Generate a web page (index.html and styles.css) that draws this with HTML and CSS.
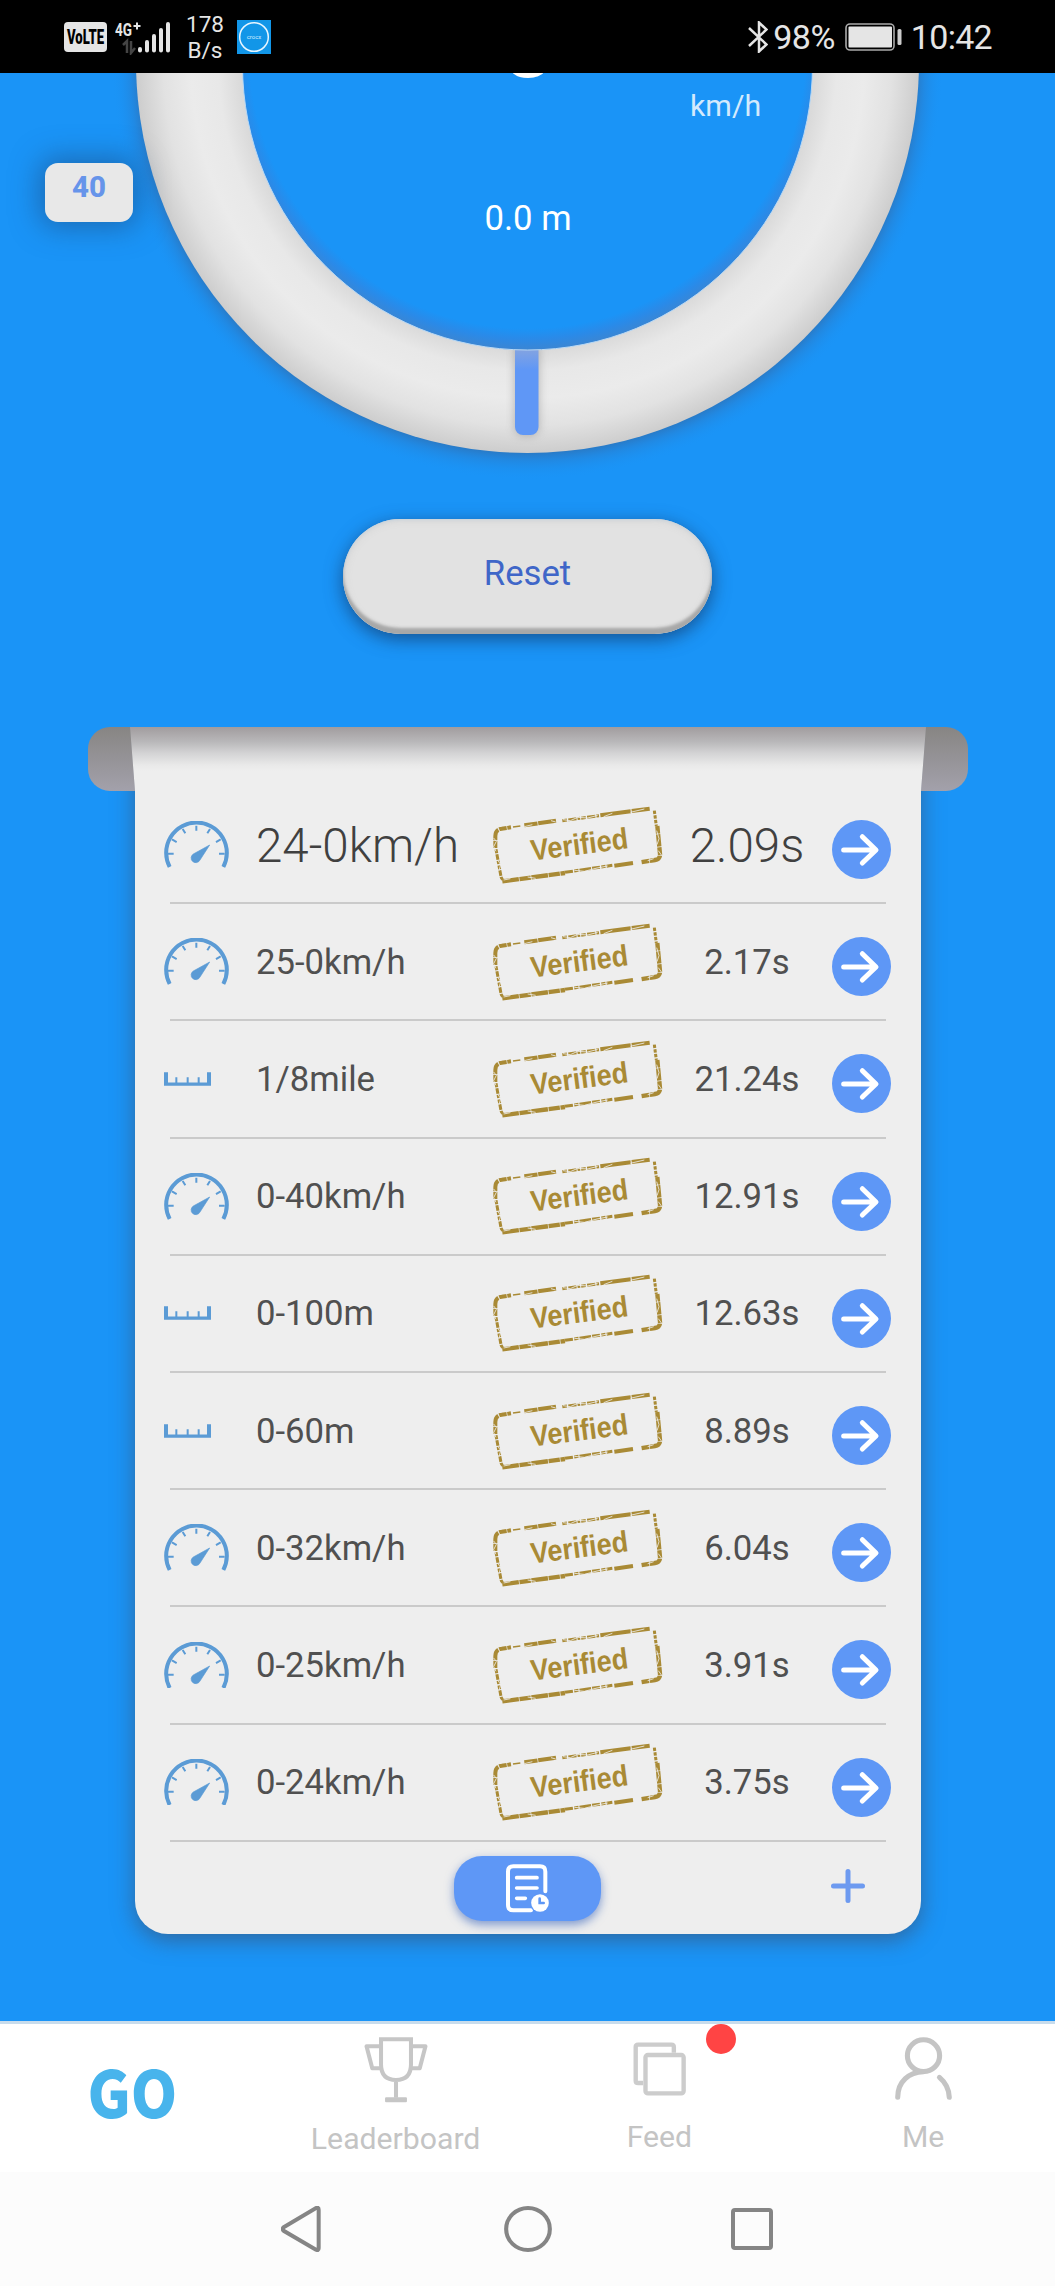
FILE: index.html
```html
<!DOCTYPE html>
<html lang="en">
<head>
<meta charset="utf-8">
<title>Speed results</title>
<link rel="stylesheet" href="styles.css">
</head>
<body>
<svg class="defs" width="0" height="0" aria-hidden="true">
  <symbol id="gauge" viewBox="282 362 195 140">
    <path d="M299 500A91 91 0 1 1 460 500" fill="none" stroke="#5b9bd5" stroke-width="12"/>
    <path d="M379 376V391M338 386L346 399M420 386L412 399M306 417L320 425M452 417L438 425M294 460H311M464 460H447" stroke="#5b9bd5" stroke-width="6"/>
    <path d="M419 434L390 479A14 14 0 1 1 370 461Z" fill="#5b9bd5" stroke="#5b9bd5" stroke-width="2"/>
  </symbol>
  <symbol id="ruler" viewBox="72 155 141 41">
    <path d="M72 155H84V186H106V170H112V186H140V170H146V186H173V170H179V186H201V155H213V196H72Z" fill="#5b9bd5"/>
  </symbol>
  <symbol id="arrow" viewBox="0 0 177 177">
    <circle cx="88.500" cy="88.500" r="88.500" fill="#5e97f6"/>
    <path d="M35 90H130M91 50L132 90L91 129" fill="none" stroke="#fff" stroke-width="15" stroke-linecap="round" stroke-linejoin="round"/>
  </symbol>
  <symbol id="stamp" viewBox="66 314 510 234">
    <g fill="none" stroke="#a98a35" stroke-width="12">
      <path d="M73 440V404Q73 384 92 382L120 378" stroke-dasharray="22 2 34 3"/>
      <path d="M75 444L90 526Q92 536 104 538" stroke-width="9" stroke-dasharray="12 3 17 3 10 4"/>
      <path d="M126 377L148 374" stroke-width="5"/>
      <path d="M160 372L256 358" stroke-dasharray="40 2 54"/>
      <path d="M274 358L386 343" stroke-width="9" stroke-dasharray="14 4 25 3 8 3"/>
      <path d="M388 342L536 322" stroke-dasharray="92 3 60"/>
      <path d="M550 328L556 374" stroke-width="9" stroke-dasharray="10 4"/>
      <path d="M559 374L567 458Q568 474 552 476L510 483" stroke-width="13" stroke-dasharray="23 2 37 2"/>
      <path d="M94 540L282 515" stroke-width="13" stroke-dasharray="50 2 34 2"/>
      <path d="M282 513L424 492" stroke-width="9" stroke-dasharray="24 4 13 3 35 3"/>
      <path d="M430 493L486 485"/>
    </g>
    <g fill="none" stroke="#eee" stroke-width="2.500">
      <path d="M68 410L76 420L68 436L75 450M80 476L89 490L84 508M98 536L118 532M160 376L184 370M240 358L254 362M276 355L298 358L320 348L350 350L380 342M398 346L424 336M478 333L520 323M557 388L564 412L558 430M562 448L572 462M530 478L548 472M170 527L194 531M310 507L340 510L378 500L410 494"/>
    </g>
    <text transform="translate(183 478) rotate(-7.300)" textLength="294" lengthAdjust="spacingAndGlyphs" class="stamp-text">Verified</text>
  </symbol>
</svg>

<header class="status">
  <div class="status-left">
    <svg class="volte" width="43" height="30" viewBox="0 0 43 30"><rect width="43" height="30" rx="4" fill="#e5e5e5"/><text x="3" y="21.500" textLength="37" lengthAdjust="spacingAndGlyphs" class="volte-text">VoLTE</text></svg>
    <svg class="signal" width="56" height="36" viewBox="0 0 56 36">
      <text x="0" y="17" textLength="17" lengthAdjust="spacingAndGlyphs" class="signal-text">4G</text>
      <path d="M18.500 7H25.500M22 3.500V10.500" stroke="#e5e5e5" stroke-width="2"/>
      <path d="M8 26L12 22V34M16 22V34L20 29" fill="none" stroke="#444" stroke-width="2.500"/>
      <path d="M25 30V31.500M32 23V31.500M39 17V31.500M46 11V31.500M53 5V31.500" stroke="#e5e5e5" stroke-width="4" stroke-linecap="round"/>
    </svg>
    <div class="rate"><span>178</span><span>B/s</span></div>
    <svg class="app" width="34" height="34" viewBox="0 0 34 34"><rect width="34" height="34" fill="#1296e8"/><circle cx="17" cy="17" r="14.300" fill="none" stroke="#e8f6ff" stroke-width="1.500"/><text x="17" y="19" text-anchor="middle" class="app-text">crocx</text></svg>
  </div>
  <div class="status-right">
    <svg class="bt" width="20" height="32" viewBox="0 0 20 32"><path d="M1 7L18.500 23.500L11 30.500V1.500L18.500 8.500L1 25" fill="none" stroke="#e5e5e5" stroke-width="2.500"/></svg>
    <span class="pct">98%</span>
    <svg class="battery" width="57" height="28" viewBox="0 0 57 28"><rect x="1" y="1" width="48" height="26" rx="4" fill="none" stroke="#aaa" stroke-width="1.600"/><rect x="3.500" y="3.500" width="43.500" height="21" rx="1" fill="#e5e5e5"/><rect x="52.500" y="6" width="4" height="16" rx="1.500" fill="#ccc"/></svg>
    <span class="clock">10:42</span>
  </div>
</header>

<main class="screen">
  <section class="dial">
    <svg width="1055" height="446" viewBox="0 73 1055 446">
      <defs>
        <radialGradient id="halo" gradientUnits="userSpaceOnUse" cx="527.500" cy="64" r="416"><stop offset=".93" stop-color="#35649d" stop-opacity=".62"/><stop offset=".955" stop-color="#3070b5" stop-opacity=".3"/><stop offset="1" stop-color="#1a94f7" stop-opacity="0"/></radialGradient>
        <radialGradient id="band" gradientUnits="userSpaceOnUse" cx="527.500" cy="61.500" r="391.500"><stop offset=".735" stop-color="#dadada"/><stop offset=".79" stop-color="#e8e8e8"/><stop offset=".86" stop-color="#ebebeb"/><stop offset=".93" stop-color="#e2e2e2"/><stop offset="1" stop-color="#cdcdcd"/></radialGradient>
        <radialGradient id="well" gradientUnits="userSpaceOnUse" cx="527.500" cy="50" r="301"><stop offset=".925" stop-color="#1a94f7"/><stop offset=".96" stop-color="#2a8ae8"/><stop offset="1" stop-color="#3d85d0"/></radialGradient>
        <linearGradient id="needle" x2="0" y2="1"><stop offset=".05" stop-color="#88a5de"/><stop offset=".3" stop-color="#5f97f6"/></linearGradient>
        <filter id="soft" x="-1" y="-1" width="3" height="3"><feGaussianBlur stdDeviation="5"/></filter>
      </defs>
      <circle cx="527.500" cy="64" r="416" fill="url(#halo)"/>
      <circle cx="527.500" cy="61.500" r="391.500" fill="url(#band)"/>
      <rect x="515" y="342" width="23.500" height="93" rx="8" fill="#777" opacity=".5" filter="url(#soft)"/>
      <rect x="515" y="342" width="23.500" height="93" rx="8" fill="url(#needle)"/>
      <circle cx="527.500" cy="65" r="285" fill="url(#well)" stroke="#b9d9f5" stroke-width="1"/>
      <text x="528" y="77" text-anchor="middle" class="speed">0</text>
      <text x="690" y="116" class="unit">km/h</text>
      <text x="528" y="229.500" text-anchor="middle" class="distance">0.0 m</text>
    </svg>
    <div class="limit">40</div>
  </section>

  <button class="reset">Reset</button>

  <section class="results">
    <div class="roller"></div>
    <div class="paper">
      <ul class="runs">
        <li class="best"><div class="run"><svg class="ic-gauge"><use href="#gauge"/></svg><span class="name">24-0km/h</span><svg class="ic-stamp"><use href="#stamp"/></svg><span class="time">2.09s</span><svg class="ic-arrow"><use href="#arrow"/></svg></div></li>
        <li><div class="run"><svg class="ic-gauge"><use href="#gauge"/></svg><span class="name">25-0km/h</span><svg class="ic-stamp"><use href="#stamp"/></svg><span class="time">2.17s</span><svg class="ic-arrow"><use href="#arrow"/></svg></div></li>
        <li><div class="run"><svg class="ic-ruler"><use href="#ruler"/></svg><span class="name">1/8mile</span><svg class="ic-stamp"><use href="#stamp"/></svg><span class="time">21.24s</span><svg class="ic-arrow"><use href="#arrow"/></svg></div></li>
        <li><div class="run"><svg class="ic-gauge"><use href="#gauge"/></svg><span class="name">0-40km/h</span><svg class="ic-stamp"><use href="#stamp"/></svg><span class="time">12.91s</span><svg class="ic-arrow"><use href="#arrow"/></svg></div></li>
        <li><div class="run"><svg class="ic-ruler"><use href="#ruler"/></svg><span class="name">0-100m</span><svg class="ic-stamp"><use href="#stamp"/></svg><span class="time">12.63s</span><svg class="ic-arrow"><use href="#arrow"/></svg></div></li>
        <li><div class="run"><svg class="ic-ruler"><use href="#ruler"/></svg><span class="name">0-60m</span><svg class="ic-stamp"><use href="#stamp"/></svg><span class="time">8.89s</span><svg class="ic-arrow"><use href="#arrow"/></svg></div></li>
        <li><div class="run"><svg class="ic-gauge"><use href="#gauge"/></svg><span class="name">0-32km/h</span><svg class="ic-stamp"><use href="#stamp"/></svg><span class="time">6.04s</span><svg class="ic-arrow"><use href="#arrow"/></svg></div></li>
        <li><div class="run"><svg class="ic-gauge"><use href="#gauge"/></svg><span class="name">0-25km/h</span><svg class="ic-stamp"><use href="#stamp"/></svg><span class="time">3.91s</span><svg class="ic-arrow"><use href="#arrow"/></svg></div></li>
        <li><div class="run"><svg class="ic-gauge"><use href="#gauge"/></svg><span class="name">0-24km/h</span><svg class="ic-stamp"><use href="#stamp"/></svg><span class="time">3.75s</span><svg class="ic-arrow"><use href="#arrow"/></svg></div></li>
      </ul>
      <footer class="actions">
        <button class="history" aria-label="History"><svg width="43" height="49" viewBox="228 134 129 147"><path d="M346 216V157Q346 141 330 141H250Q234 141 234 157V257Q234 273 250 273H303" fill="none" stroke="#fff" stroke-width="12" stroke-linecap="round"/><path d="M260 175H321M260 206H321M260 237H286" stroke="#fff" stroke-width="11" stroke-linecap="round"/><circle cx="330" cy="251" r="30" fill="#5e97f6"/><circle cx="330" cy="251" r="26.500" fill="#fff"/><path d="M329 238V251H341" fill="none" stroke="#5e97f6" stroke-width="8" stroke-linecap="round"/></svg></button>
        <button class="add" aria-label="Add"><svg width="34" height="34" viewBox="0 0 34 34"><path d="M17 2.500V31.500M2.500 17H31.500" stroke="#6d9af0" stroke-width="5" stroke-linecap="round"/></svg></button>
      </footer>
    </div>
  </section>
</main>

<nav class="tabs">
  <a class="tab go"><span>GO</span></a>
  <a class="tab board"><svg width="64" height="66" viewBox="1073.500 110 190 198" preserveAspectRatio="none"><g fill="none" stroke="#c6c6c6" stroke-width="12"><path d="M1124 117H1213V192Q1213 239 1168.500 239Q1124 239 1124 192ZM1168.500 240V292"/><path d="M1124 138H1081L1098 204H1124M1213 138H1256L1239 204H1213" stroke-linejoin="round"/></g><rect x="1136" y="291" width="65" height="15" rx="3" fill="#c6c6c6"/></svg><span>Leaderboard</span></a>
  <a class="tab feed"><svg width="53" height="54" viewBox="319 126 157 162" preserveAspectRatio="none"><g fill="none" stroke="#ccc" stroke-width="13"><path d="M349 249H334Q327 249 327 242V141Q327 134 334 134H433Q440 134 440 141V158"/><rect x="356" y="165" width="113" height="115" rx="7"/></g></svg><span>Feed</span><i class="dot"></i></a>
  <a class="tab me"><svg width="57" height="63" viewBox="1094 112 168 189" preserveAspectRatio="none"><g fill="none" stroke="#c4c4c4" stroke-width="15" stroke-linecap="round"><circle cx="1178" cy="168" r="47.500"/><path d="M1102 293C1102 245 1136 217 1178 216M1225 233Q1253 257 1254 293"/></g></svg><span>Me</span></a>
</nav>

<nav class="system">
  <svg width="40" height="46" viewBox="832 615 120 139" preserveAspectRatio="none"><path d="M840 679L937 621Q945 618 945 626V743Q945 751 937 747L840 690Q834 684.500 840 679Z" fill="none" stroke="#858585" stroke-width="12"/></svg>
  <svg width="48" height="46" viewBox="0 0 47 47" preserveAspectRatio="none"><circle cx="23.500" cy="23.500" r="21.400" fill="none" stroke="#858585" stroke-width="4"/></svg>
  <svg width="42" height="42" viewBox="0 0 42 42"><rect x="2" y="2" width="38" height="38" rx="2" fill="none" stroke="#858585" stroke-width="4"/></svg>
</nav>
</body>
</html>
```

FILE: styles.css
```css
* { box-sizing: border-box; }
body {
  margin: 0;
  width: 1055px;
  font-family: Roboto, "Noto Sans", sans-serif;
  background: #fcfcfc;
}
svg { display: block; flex: none; }
button { border: 0; padding: 0; font: inherit; }
.defs { position: absolute; }

.status {
  height: 73px;
  display: flex;
  justify-content: space-between;
  background: #000;
  color: #e5e5e5;
  padding: 0 63px 0 64px;
}
.status-left, .status-right { display: flex; align-items: center; }
.volte { margin-top: 1px; }
.signal { margin-left: 8px; }
.volte-text { font: 900 20px Roboto, sans-serif; fill: #000; }
.signal-text { font: 700 19px Roboto, sans-serif; fill: #e5e5e5; }
.rate {
  width: 40px;
  margin: 1px 0 0 14px;
  display: flex;
  flex-direction: column;
  align-items: center;
  font-size: 22.500px;
  line-height: 26.500px;
}
.app { margin-left: 12px; margin-top: 1px; }
.app-text { font: 6px Roboto, sans-serif; fill: #cdeaff; }
.pct { margin-left: 5px; font-size: 34px; letter-spacing: -.5px; }
.battery { margin-left: 10px; }
.clock { margin-left: 9px; font-size: 34px; letter-spacing: -.7px; }

.screen { height: 1948px; background: #1a94f7; overflow: hidden; }
.dial { position: relative; height: 446px; }
.speed { font: 500 104px Roboto, sans-serif; fill: #fff; }
.unit { font: 30.300px Roboto, sans-serif; fill: #d3eafd; }
.distance { font: 34.700px Roboto, sans-serif; fill: #fff; }
.limit {
  position: absolute;
  left: 45px;
  top: 90px;
  width: 88px;
  height: 59px;
  padding-top: 6px;
  border-radius: 13px;
  background: #e8e8e8;
  box-shadow: 0 0 28px 6px rgba(30, 70, 120, .5);
  color: #6694ea;
  font-size: 29.500px;
  font-weight: 800;
  line-height: 36px;
  text-align: center;
}
.reset {
  display: block;
  width: 369px;
  height: 115px;
  margin: 0 auto;
  padding-bottom: 8px;
  border-radius: 58px;
  background: #e2e2e2;
  box-shadow: inset 0 -6px 3px #a8a8a8, inset 0 1px 3px #c8d4de, inset 0 0 10px #cfcfcf, 0 5px 18px rgba(20, 60, 110, .75);
  color: #3f66c8;
  font-size: 34.700px;
}

.results { display: grid; padding: 93px 87px 0 88px; }
.roller, .paper { grid-area: 1 / 1; }
.roller {
  height: 64px;
  border-radius: 22px;
  background: linear-gradient(#878583, #a3a1ab);
}
.paper {
  position: relative;
  height: 1207px;
  margin: 0 47px;
  padding-top: 60px;
  border-radius: 0 0 33px 33px;
  background: #eee;
  box-shadow: 0 6px 22px rgba(60, 80, 110, .65);
  clip-path: polygon(-5px 0, 791px 0, 786px 64px, 826px 64px, 826px 1260px, -40px 1260px, -40px 64px, 0 64px);
}
.paper::before {
  content: "";
  position: absolute;
  left: -5px;
  right: -5px;
  top: 0;
  height: 64px;
  background: linear-gradient(#a19c9e, #b9b8ba 15px, #d3d3d4 26px, #e9e9e9 38px, #eee 44px);
}
.runs { position: relative; list-style: none; margin: 0 35px; padding: 0; }
.runs li { height: 117.200px; border-bottom: 2px solid #cacaca; }
.run {
  height: 100%;
  margin: 0 -6px;
  display: grid;
  grid-template-columns: 92px 237px 169px 170px 59px;
  align-items: center;
  color: #505050;
  font-size: 34.700px;
}
.best .run { color: #404040; font-size: 47.500px; font-weight: 300; }
.best .name, .best .time { padding-top: 3px; }
.time { text-align: center; }
.ic-gauge { width: 65px; height: 46.700px; }
.ic-ruler { width: 47px; height: 14px; }
.ic-stamp { width: 170px; height: 78px; }
.ic-arrow { width: 59px; height: 59px; margin-top: 10px; }
.stamp-text { font: 700 89px "Liberation Sans", Arial, sans-serif; fill: #a98a35; }

.actions {
  height: 92px;
  padding: 14px 56px 0 319px;
  display: flex;
  justify-content: space-between;
  align-items: flex-start;
}
.history {
  width: 147px;
  height: 65px;
  display: grid;
  place-items: center;
  border-radius: 28px;
  background: #5e97f6;
  box-shadow: 0 4px 10px rgba(70, 110, 190, .65);
}
.add { margin-top: 13px; background: none; }

.tabs {
  height: 151px;
  display: grid;
  grid-template-columns: repeat(4, 1fr);
  background: #fff;
  border-top: 3px solid #c8dcec;
  color: #c4c4c4;
  font-size: 30.200px;
}
.tab {
  position: relative;
  display: flex;
  flex-direction: column;
  align-items: center;
  line-height: 36px;
}
.tab span { margin-top: auto; }
.board { padding: 13px 0 15px; }
.feed { padding: 18px 0 17px; }
.me { padding: 13px 0 17px; }
.go {
  justify-content: center;
  padding-bottom: 16px;
  color: #48b4ec;
  font: 900 65px/70px "Noto Sans CJK SC", sans-serif;
}
.tab.go span { margin: 0; transform: scaleX(.91); }
.dot {
  position: absolute;
  left: 178px;
  top: 0;
  width: 30px;
  height: 30px;
  border-radius: 50%;
  background: #ff4444;
}
.system {
  height: 113px;
  padding: 0 282px 0 281px;
  display: flex;
  align-items: center;
  justify-content: space-between;
}
.system svg:nth-child(2) { margin-left: 4px; }
```
